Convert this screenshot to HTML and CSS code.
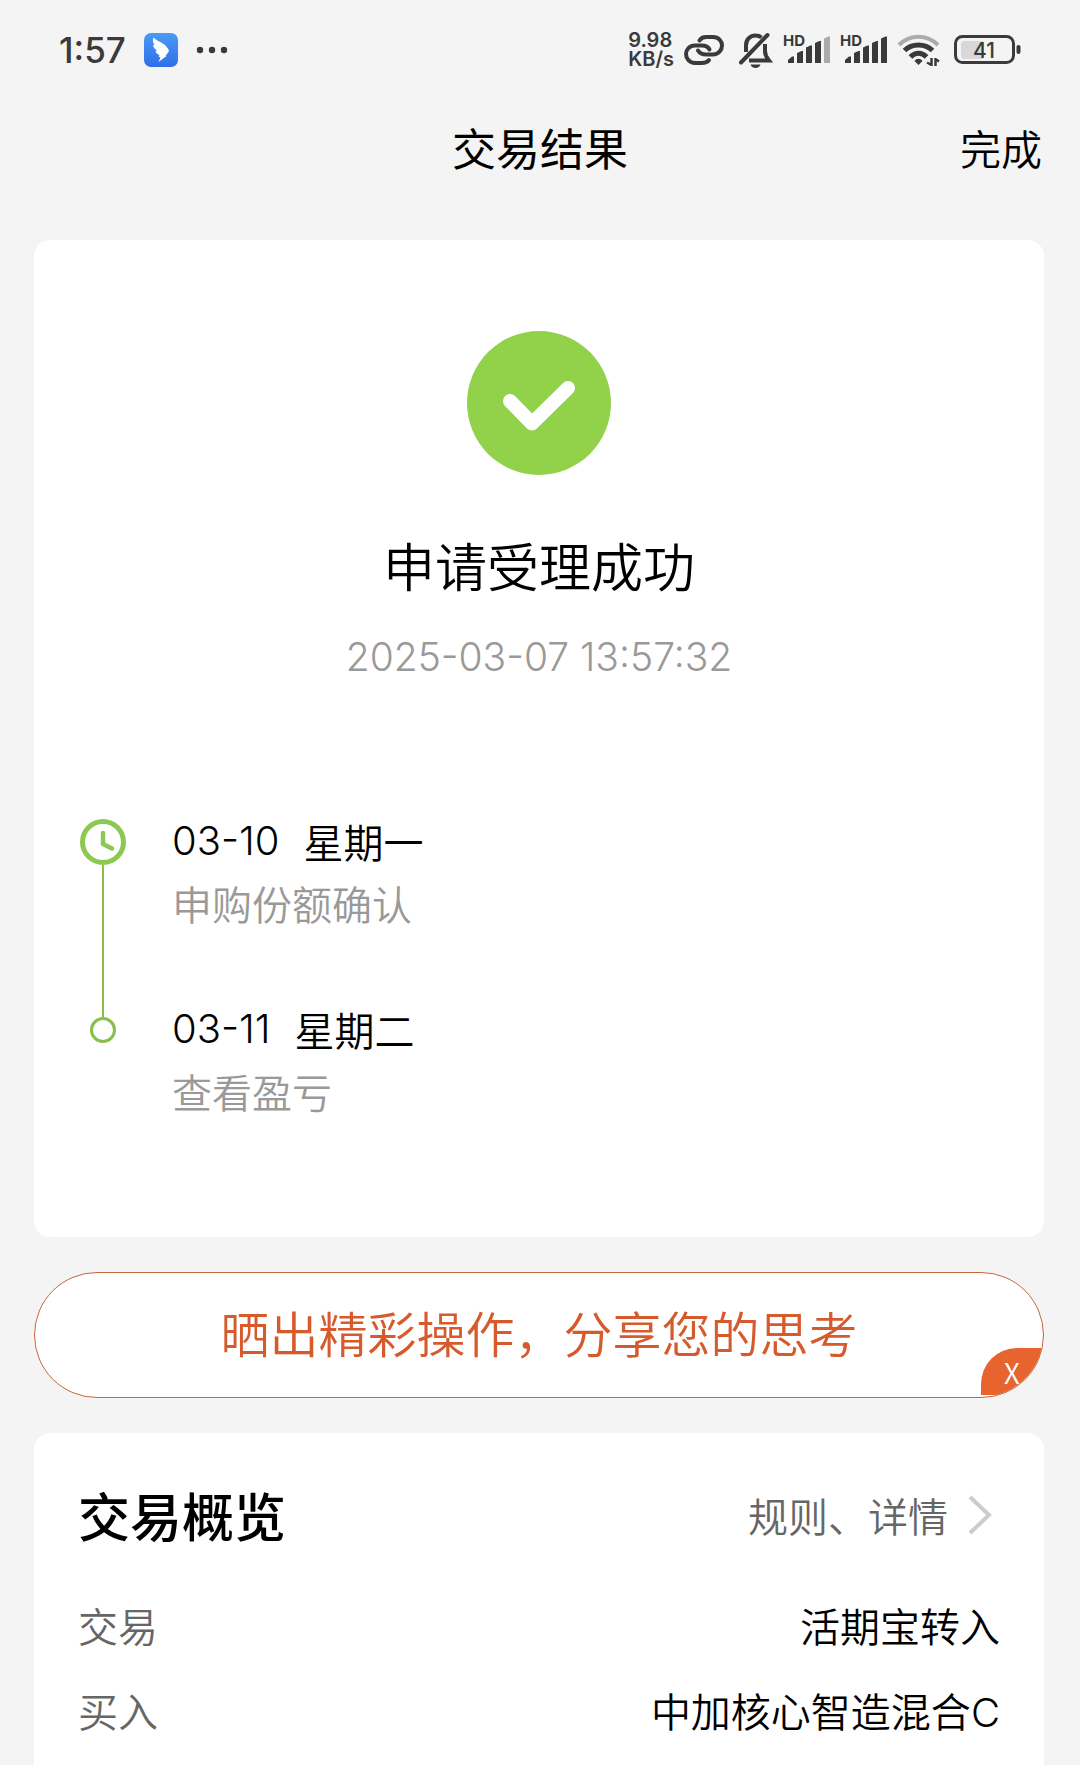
FILE: index.html
```html
<!DOCTYPE html>
<html lang="zh-CN">
<head>
    <meta charset="UTF-8">
    <meta name="viewport" content="width=device-width, initial-scale=1.0">
    <title>交易结果</title>
    <link rel="stylesheet" href="styles.css">
</head>
<body>
    <div class="status-bar">
        <div class="status-left">
            <span class="clock">1:57</span>
            <svg class="app-icon" width="34" height="34" viewBox="0 0 34 34">
                <defs>
                    <linearGradient id="appBlue" x1="0" y1="0" x2="0" y2="1">
                        <stop offset="0" stop-color="#4a9af5"/>
                        <stop offset="1" stop-color="#2f6fe8"/>
                    </linearGradient>
                </defs>
                <rect width="34" height="34" rx="7" fill="url(#appBlue)"/>
                <path d="M9.500 4.500C12 7.500 18 9 22 13L24.500 16.500C25 17.500 25 18 24.500 19L21.500 23H22.500L14.500 29L16.500 24.500L14.500 23.500L15.500 22C13 21 12 20 11.500 18L13 17.500C10.500 16 9.500 14.500 9 12L10.500 12C9 9.500 8.500 7 9.500 4.500Z" fill="#fff"/>
            </svg>
            <svg width="32" height="8" viewBox="0 0 32 8" fill="#3a3a3a">
                <circle cx="4" cy="4" r="3.200"/>
                <circle cx="16" cy="4" r="3.200"/>
                <circle cx="28" cy="4" r="3.200"/>
            </svg>
        </div>
        <div class="status-right">
            <div class="speed">
                <span>9.98</span>
                <span>KB/s</span>
            </div>
            <!-- enlace -->
            <svg width="44" height="36" viewBox="0 0 44 36" fill="none" stroke="#3a3a3a" stroke-width="4" stroke-linecap="round">
                <path d="M15.500 8.500C17 6 19.500 5 22 5H29C34.500 5 38 9 38 13.500S34.500 22.500 29 22.500H22C18 22.500 15.500 21 14 18.500"/>
                <path d="M25.500 17.500C24 14.500 21.500 13.500 18 13.500H11C5.500 13.500 2 17.500 2 22S5.500 31 11 31H18C21 31 23.500 30 25 28"/>
            </svg>
            <!-- campana silenciada -->
            <svg width="35" height="36" viewBox="0 0 35 36" fill="none" stroke="#3a3a3a" stroke-width="4">
                <path d="M8 20V13.500C8 7.500 12 3.500 17.500 3.500C20 3.500 22 4.200 23.500 5.500"/>
                <path d="M27 12V19C27 24 29 26 31 28.500H11"/>
                <path d="M3 30.500L29.500 3" stroke-linecap="round"/>
                <path d="M12.500 32.500H22.500C21.500 37 13.500 37 12.500 32.500Z" fill="#3a3a3a" stroke="none"/>
            </svg>
            <svg class="signal" width="47" height="36" viewBox="0 0 47 36" fill="#3a3a3a">
                <text x="0" y="14">HD</text>
                <path d="M5 31V28L9 24.500H11V31Z"/>
                <path d="M14 31V21L18.500 19H20V31Z"/>
                <path d="M23 31V15.500L27.500 13.500H29V31Z"/>
                <path d="M32 31V11L36.500 9H38V31Z"/>
                <path d="M41 31V6.500L45.500 4.500H47V31Z" fill="#ababab"/>
            </svg>
            <svg class="signal" width="47" height="36" viewBox="0 0 47 36" fill="#3a3a3a">
                <text x="0" y="14">HD</text>
                <path d="M5 31V28L9 24.500H11V31Z"/>
                <path d="M14 31V21L18.500 19H20V31Z"/>
                <path d="M23 31V15.500L27.500 13.500H29V31Z"/>
                <path d="M32 31V11L36.500 9H38V31Z"/>
                <path d="M41 31V6.500L45.500 4.500H47V31Z"/>
            </svg>
            <!-- wifi -->
            <svg width="45" height="36" viewBox="0 0 45 36" fill="none" stroke="#3a3a3a" stroke-width="5">
                <path d="M2 13C13 2 30 2 41 13" stroke="#ababab" stroke-width="4"/>
                <path d="M7.500 18.500C15 11 28 11 35.500 18.500"/>
                <path d="M13.500 25C18 20 25 20 29.500 25"/>
                <path d="M17.500 29C19.500 26 23.500 26 25.500 29L21.500 33Z" fill="#3a3a3a" stroke="none"/>
                <path d="M34.500 26V34M34.500 33L30 30.500M38.500 34V26M38.500 27L42 29.500" stroke-width="2.500"/>
            </svg>
            <svg class="battery" width="69" height="36" viewBox="0 0 69 36">
                <rect x="3.500" y="4.500" width="58" height="26" rx="7" fill="none" stroke="#3a3a3a" stroke-width="3"/>
                <rect x="9" y="9" width="23" height="18" rx="3" fill="#d8d8d8"/>
                <rect x="64.500" y="13" width="4" height="9" rx="2" fill="#3a3a3a"/>
                <text x="32" y="26" text-anchor="middle">41</text>
            </svg>
        </div>
    </div>

    <header class="nav-bar">
        <h1>交易结果</h1>
        <button class="done-btn" type="button">完成</button>
    </header>

    <main>
        <section class="card result">
            <svg class="result-icon" width="144" height="144" viewBox="0 0 144 144">
                <circle cx="72" cy="72" r="72" fill="#92d14a"/>
                <path d="M43 70L65 92.500L101 57" fill="none" stroke="#fff" stroke-width="14" stroke-linecap="round" stroke-linejoin="round"/>
            </svg>
            <h2>申请受理成功</h2>
            <time class="result-time">2025-03-07 13:57:32</time>

            <ol class="timeline">
                <li class="step">
                    <div class="rail">
                        <svg class="rail-clock" width="46" height="46" viewBox="0 0 46 46" fill="none" stroke="#8dc951">
                            <circle cx="23" cy="23" r="20.500" stroke-width="5"/>
                            <path d="M23 14V25L32 29.500" stroke-width="4.500" stroke-linecap="round" stroke-linejoin="round"/>
                        </svg>
                        <span class="rail-line"></span>
                    </div>
                    <div class="step-text">
                        <p class="step-date"><span class="latin">03-10</span><span>星期一</span></p>
                        <p class="step-desc">申购份额确认</p>
                    </div>
                </li>
                <li class="step">
                    <div class="rail">
                        <span class="rail-line rail-lead"></span>
                        <span class="rail-dot"></span>
                    </div>
                    <div class="step-text">
                        <p class="step-date"><span class="latin">03-11</span><span>星期二</span></p>
                        <p class="step-desc">查看盈亏</p>
                    </div>
                </li>
            </ol>
        </section>

        <div class="share">
            <button class="share-btn" type="button">晒出精彩操作，分享您的思考</button>
            <button class="share-close" type="button">X</button>
        </div>

        <section class="card overview">
            <div class="overview-header">
                <h2>交易概览</h2>
                <a class="detail-link" href="#">
                    规则、详情
                    <svg width="26" height="40" viewBox="0 0 26 40" fill="none" stroke="#ccc" stroke-width="4">
                        <path d="M2 2L21 20L2 38"/>
                    </svg>
                </a>
            </div>
            <dl>
                <div class="row">
                    <dt>交易</dt>
                    <dd>活期宝转入</dd>
                </div>
                <div class="row">
                    <dt>买入</dt>
                    <dd>中加核心智造混合<span class="latin">C</span></dd>
                </div>
            </dl>
        </section>
    </main>
</body>
</html>
```
FILE: styles.css
```css
:root {
    --color-fondo: #f4f4f4;
    --color-icono: #3a3a3a;
    --color-verde: #86c04a;
    --color-naranja: #d65a2c;
    --color-gris: #999;
    --color-etiqueta: #666;
}

* {
    box-sizing: border-box;
    margin: 0;
    padding: 0;
}

body {
    font-family: "Noto Sans CJK SC", sans-serif;
    font-size: 40px;
    font-weight: 350;
    color: #000;
    background-color: var(--color-fondo);
}

button {
    font-family: inherit;
    font-weight: inherit;
    border: none;
    background: none;
    cursor: pointer;
}

svg {
    display: block;
    flex: none;
}

.latin {
    font-family: Inter, sans-serif;
}

.status-bar {
    display: flex;
    justify-content: space-between;
    align-items: center;
    height: 100px;
    padding: 0 59px;
    color: var(--color-icono);
}

.status-left {
    display: flex;
    align-items: center;
    gap: 18px;
}

.status-right {
    display: flex;
    align-items: center;
    gap: 10px;
}

.clock {
    font-family: Inter, sans-serif;
    font-size: 35px;
    font-weight: 500;
    line-height: 40px;
}

.speed {
    display: flex;
    flex-direction: column;
    font-family: Inter, sans-serif;
    font-size: 20px;
    font-weight: 600;
    line-height: 19px;
}

.signal text {
    font-family: Inter, sans-serif;
    font-size: 15px;
    font-weight: 700;
}

.battery text {
    font-family: Inter, sans-serif;
    font-size: 21px;
    font-weight: 500;
    fill: var(--color-icono);
}

.nav-bar {
    display: grid;
    grid-template-columns: 1fr auto 1fr;
    align-items: center;
    height: 94px;
    padding: 0 38px;
}

.nav-bar h1 {
    grid-column: 2;
    font-size: 44px;
    font-weight: 400;
}

.done-btn {
    justify-self: end;
    font-size: 41px;
}

main {
    display: flex;
    flex-direction: column;
    gap: 35px;
    padding: 46px 36px 0 34px;
}

.card {
    background-color: #fff;
    border-radius: 16px;
}

.result {
    display: flex;
    flex-direction: column;
    align-items: center;
    padding: 91px 46px 115px;
}

.result h2 {
    margin-top: 54px;
    font-size: 52px;
    font-weight: inherit;
    line-height: 72px;
}

.result-time {
    margin-top: 28px;
    font-family: Inter, sans-serif;
    font-size: 39px;
    line-height: 56px;
    color: var(--color-gris);
}

.timeline {
    align-self: stretch;
    margin-top: 125px;
    list-style: none;
}

.step {
    display: flex;
    gap: 46px;
}

.step:not(:last-child) .step-text {
    padding-bottom: 64px;
}

.step-text p {
    line-height: 62px;
}

.step-date {
    display: flex;
    gap: 24px;
}

.step-desc {
    color: var(--color-gris);
}

.rail {
    display: flex;
    flex-direction: column;
    align-items: center;
    width: 46px;
}

.rail-clock {
    margin-top: 9px;
}

.rail-line {
    flex: 1;
    width: 2px;
    background-color: var(--color-verde);
}

.rail-lead {
    flex: none;
    height: 19px;
}

.rail-dot {
    width: 26px;
    height: 26px;
    border: 3px solid var(--color-verde);
    border-radius: 50%;
}

.share {
    position: relative;
    border: 1px solid #c4673f;
    border-radius: 63px;
    background-color: #fff;
    overflow: hidden;
}

.share-btn {
    display: block;
    width: 100%;
    padding: 23px 0 29px;
    color: var(--color-naranja);
    font-size: 49px;
    line-height: 72px;
}

/* Botón de cierre sobre la esquina inferior derecha */
.share-close {
    position: absolute;
    right: 0;
    bottom: 2px;
    width: 62px;
    height: 47px;
    border-radius: 36px 0 0 0;
    background-color: #e8642f;
    color: #fff;
    font-size: 28px;
    line-height: 42px;
}

.overview {
    padding: 50px 44px 13px;
    border-radius: 16px 16px 0 0;
}

.overview-header {
    display: flex;
    justify-content: space-between;
    align-items: center;
    margin-bottom: 36px;
}

.overview-header h2 {
    font-size: 52px;
    font-weight: 500;
    line-height: 64px;
}

.detail-link {
    display: flex;
    align-items: center;
    gap: 20px;
    margin-right: 6px;
    line-height: 64px;
    color: var(--color-etiqueta);
    text-decoration: none;
}

.row {
    display: flex;
    justify-content: space-between;
    line-height: 85px;
}

.row dt {
    color: var(--color-etiqueta);
}
```
